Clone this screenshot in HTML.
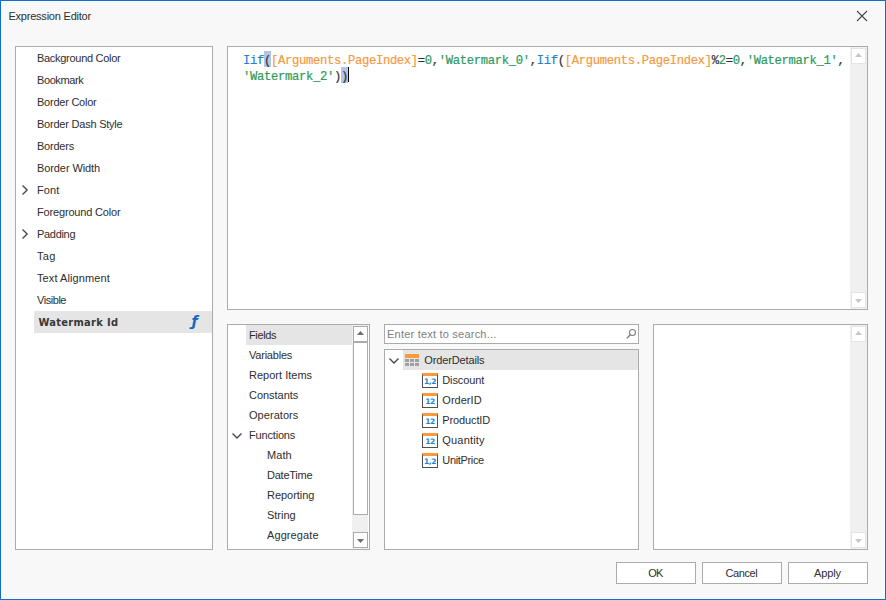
<!DOCTYPE html>
<html lang="en">
<head>
<meta charset="utf-8">
<title>Expression Editor</title>
<style>
html,body{margin:0;padding:0;}
body{width:886px;height:600px;overflow:hidden;background:#f8f8f8;font-family:"Liberation Sans",sans-serif;font-size:11px;color:#2e2e2e;position:relative;}
.win{position:absolute;left:0;top:0;width:884px;height:598px;border:1px solid #0f6fc6;background:#f8f8f8;}
.abs{position:absolute;}
.box{position:absolute;background:#fff;border:1px solid #ababab;box-sizing:border-box;}
.t{position:absolute;white-space:nowrap;}
.title{left:8.4px;top:9px;line-height:14px;}
.row{position:absolute;left:0;right:0;}
.row span{position:absolute;top:0;white-space:nowrap;}
.hl{position:absolute;background:#e5e5e5;}
#props .row{height:22px;line-height:22px;}
#props .row span{left:21px;}
#cats .row,#tree .row{height:20px;line-height:20px;}
.track{position:absolute;background:#f0f0f0;width:17px;}
.sbtn{position:absolute;left:1px;width:15px;height:16px;box-sizing:border-box;background:#fff;border:1px solid #e4e4e4;}
.sbtn.on{border-color:#ababab;}
.thumb{position:absolute;left:1px;width:15px;box-sizing:border-box;background:#fff;border:1px solid #ababab;}
.sbtn svg{position:absolute;left:3px;top:5px;width:7px;height:4px;display:block;}
.code{position:absolute;left:15px;font-family:"Liberation Mono",monospace;font-size:12.2px;letter-spacing:-0.32px;line-height:16px;-webkit-text-stroke:0.2px;height:16px;white-space:pre;color:#333;}
.kw{color:#2b7fd0;}.fld{color:#f59a3e;}.str{color:#2e9a5a;}
.bm{background:#b3c5e6;}
.code{z-index:2;}
.btn{position:absolute;top:562px;width:80px;height:22px;box-sizing:border-box;border:1px solid #ababab;background:#fff;text-align:center;line-height:20px;}
.fi{position:absolute;left:37px;top:3px;width:16px;height:15px;box-sizing:border-box;border:1px solid #505050;border-top:3px solid #f99b3c;background:#fff;}
.fi b{position:absolute;left:0;right:0;top:1px;text-align:center;font:bold 7.5px/9px "DejaVu Sans","Liberation Sans",sans-serif;color:#1a86d2;letter-spacing:-0.5px;}
</style>
</head>
<body>
<div class="win"></div>
<div class="t title" style="letter-spacing:-0.214px">Expression Editor</div>
<svg class="abs" style="left:856px;top:10px" width="12" height="12" viewBox="0 0 12 12"><path d="M1 1 L11 11 M11 1 L1 11" stroke="#484848" stroke-width="1.1" fill="none"/></svg>

<!-- property list -->
<div class="box" id="props" style="left:15px;top:46px;width:198px;height:504px;">
<div class="hl" style="left:18px;right:0;top:264px;height:22px;"></div>
<div class="row" style="top:0px"><span style="letter-spacing:-0.291px">Background Color</span></div>
<div class="row" style="top:22px"><span style="letter-spacing:-0.404px">Bookmark</span></div>
<div class="row" style="top:44px"><span style="letter-spacing:-0.242px">Border Color</span></div>
<div class="row" style="top:66px"><span style="letter-spacing:-0.223px">Border Dash Style</span></div>
<div class="row" style="top:88px"><span style="letter-spacing:-0.222px">Borders</span></div>
<div class="row" style="top:110px"><span style="letter-spacing:-0.091px">Border Width</span></div>
<div class="row" style="top:132px"><svg class="abs" style="left:5px;top:5px" width="8" height="12" viewBox="0 0 8 12"><path d="M1.5 1.5 L6.2 6 L1.5 10.5" stroke="#444" stroke-width="1.3" fill="none"/></svg><span style="letter-spacing:0.128px">Font</span></div>
<div class="row" style="top:154px"><span style="letter-spacing:-0.168px">Foreground Color</span></div>
<div class="row" style="top:176px"><svg class="abs" style="left:5px;top:5px" width="8" height="12" viewBox="0 0 8 12"><path d="M1.5 1.5 L6.2 6 L1.5 10.5" stroke="#444" stroke-width="1.3" fill="none"/></svg><span style="letter-spacing:-0.312px">Padding</span></div>
<div class="row" style="top:198px"><span style="letter-spacing:0.275px">Tag</span></div>
<div class="row" style="top:220px"><span style="letter-spacing:0.089px">Text Alignment</span></div>
<div class="row" style="top:242px"><span style="letter-spacing:-0.453px">Visible</span></div>
<div class="row" style="top:264px"><i class="abs" style="left:175.4px;top:0;font:italic bold 14.5px 'DejaVu Sans','Liberation Sans',sans-serif;line-height:20px;color:#1268c0;">&#402;</i><span style="letter-spacing:0.309px;font-weight:bold;font-family:'DejaVu Sans Condensed','Liberation Sans',sans-serif;color:#383838;left:22.4px;top:1px">Watermark Id</span></div>
</div>

<!-- editor -->
<div class="box" id="editor" style="left:227px;top:46px;width:641px;height:264px;">
<div class="code" style="top:6px"><span class="kw">Iif</span>(<span class="fld">[Arguments.PageIndex]</span>=<span class="str">0</span>,<span class="str">'Watermark_0'</span>,<span class="kw">Iif</span>(<span class="fld">[Arguments.PageIndex]</span>%<span class="str">2</span>=<span class="str">0</span>,<span class="str">'Watermark_1'</span>,</div>
<div class="code" style="top:22px"><span class="str">'Watermark_2'</span>))</div>
<div class="bm abs" style="left:36px;top:4px;width:7px;height:16px"></div><div class="bm abs" style="left:113px;top:20px;width:7px;height:16px"></div>
<div class="abs" style="left:120px;top:20px;width:1px;height:15px;background:#000"></div>
<div class="track" style="left:622px;top:0px;height:262px;width:17px"><div class="sbtn" style="top:1px"><svg style="top:4px" viewBox="0 0 7 4"><path d="M0 4 L3.5 0 L7 4 Z" fill="#c6c6c6"/></svg></div><div class="sbtn" style="top:245px"><svg style="top:6px" viewBox="0 0 7 4"><path d="M0 0 L7 0 L3.5 4 Z" fill="#c6c6c6"/></svg></div></div>
</div>

<!-- categories -->
<div class="box" id="cats" style="left:227px;top:324px;width:143px;height:226px;">
<div class="hl" style="left:18px;top:0;width:106px;height:20px;"></div>
<div class="row" style="top:0px"><span style="left:21px;letter-spacing:-0.369px">Fields</span></div>
<div class="row" style="top:20px"><span style="left:21px;letter-spacing:-0.218px">Variables</span></div>
<div class="row" style="top:40px"><span style="left:21px;letter-spacing:0.012px">Report Items</span></div>
<div class="row" style="top:60px"><span style="left:21px;letter-spacing:-0.029px">Constants</span></div>
<div class="row" style="top:80px"><span style="left:21px;letter-spacing:0.047px">Operators</span></div>
<div class="row" style="top:100px"><svg class="abs" style="left:3px;top:7px" width="12" height="8" viewBox="0 0 12 8"><path d="M1.5 1.5 L6 6 L10.5 1.5" stroke="#444" stroke-width="1.3" fill="none"/></svg><span style="left:21px;letter-spacing:-0.175px">Functions</span></div>
<div class="row" style="top:120px"><span style="left:39px;letter-spacing:0.077px">Math</span></div>
<div class="row" style="top:140px"><span style="left:39px;letter-spacing:-0.240px">DateTime</span></div>
<div class="row" style="top:160px"><span style="left:39px;letter-spacing:-0.038px">Reporting</span></div>
<div class="row" style="top:180px"><span style="left:39px;letter-spacing:-0.010px">String</span></div>
<div class="row" style="top:200px"><span style="left:39px;letter-spacing:0.092px">Aggregate</span></div>
<div class="track" style="left:124px;top:0px;height:224px;width:16px"><div class="sbtn on" style="top:1px"><svg style="top:4px" viewBox="0 0 7 4"><path d="M0 4 L3.5 0 L7 4 Z" fill="#6e6e6e"/></svg></div><div class="thumb" style="top:17px;height:173px"></div><div class="sbtn on" style="top:207px"><svg style="top:6px" viewBox="0 0 7 4"><path d="M0 0 L7 0 L3.5 4 Z" fill="#6e6e6e"/></svg></div></div>
</div>

<!-- search -->
<div class="box" id="search" style="left:384px;top:324px;width:255px;height:20px;">
<span class="t" style="left:2px;top:-1px;line-height:20px;color:#7e7e82;letter-spacing:0.215px">Enter text to search...</span>
<svg class="abs" style="left:240.2px;top:3px" width="12" height="12" viewBox="0 0 12 12"><circle cx="7.5" cy="4.5" r="3" stroke="#808080" stroke-width="1.1" fill="none"/><path d="M5.3 6.7 L1.8 10.2" stroke="#808080" stroke-width="1.4" fill="none"/></svg>
</div>

<!-- tree -->
<div class="box" id="tree" style="left:384px;top:349px;width:255px;height:201px;">
<div class="hl" style="left:18px;right:0;top:0;height:20px;"></div>
<div class="row" style="top:0"><svg class="abs" style="left:3px;top:7px" width="12" height="8" viewBox="0 0 12 8"><path d="M1.5 1.5 L6 6 L10.5 1.5" stroke="#444" stroke-width="1.3" fill="none"/></svg><svg class="abs" style="left:20px;top:4px" width="14" height="12" viewBox="0 0 14 12"><rect x="0" y="0" width="14" height="4" fill="#f99b3c"/><rect x="0" y="5" width="4" height="3" fill="#a0a0a0"/><rect x="5" y="5" width="4" height="3" fill="#a0a0a0"/><rect x="10" y="5" width="4" height="3" fill="#a0a0a0"/><rect x="0" y="9" width="4" height="3" fill="#a0a0a0"/><rect x="5" y="9" width="4" height="3" fill="#a0a0a0"/><rect x="10" y="9" width="4" height="3" fill="#a0a0a0"/></svg><span style="left:39.3px;letter-spacing:-0.132px">OrderDetails</span></div>
<div class="row" style="top:20px"><div class="fi"><b>1,2</b></div><span style="left:57.3px;letter-spacing:-0.128px">Discount</span></div>
<div class="row" style="top:40px"><div class="fi"><b>12</b></div><span style="left:57.3px;letter-spacing:0.029px">OrderID</span></div>
<div class="row" style="top:60px"><div class="fi"><b>12</b></div><span style="left:57.3px;letter-spacing:-0.128px">ProductID</span></div>
<div class="row" style="top:80px"><div class="fi"><b>12</b></div><span style="left:57.3px;letter-spacing:0.190px">Quantity</span></div>
<div class="row" style="top:100px"><div class="fi"><b>1,2</b></div><span style="left:57.3px;letter-spacing:-0.341px">UnitPrice</span></div>
</div>

<!-- description -->
<div class="box" id="desc" style="left:653px;top:324px;width:215px;height:226px;">
<div class="track" style="left:196px;top:0px;height:224px;width:17px"><div class="sbtn" style="top:1px"><svg style="top:4px" viewBox="0 0 7 4"><path d="M0 4 L3.5 0 L7 4 Z" fill="#c6c6c6"/></svg></div><div class="sbtn" style="top:207px"><svg style="top:6px" viewBox="0 0 7 4"><path d="M0 0 L7 0 L3.5 4 Z" fill="#c6c6c6"/></svg></div></div>
</div>

<div class="btn" style="left:616px;"><span style="position:relative;left:-0.6px;letter-spacing:-0.700px">OK</span></div>
<div class="btn" style="left:702px;"><span style="position:relative;left:-0.6px;letter-spacing:-0.410px">Cancel</span></div>
<div class="btn" style="left:788px;"><span style="position:relative;left:-0.6px;letter-spacing:-0.158px">Apply</span></div>
</body>
</html>
